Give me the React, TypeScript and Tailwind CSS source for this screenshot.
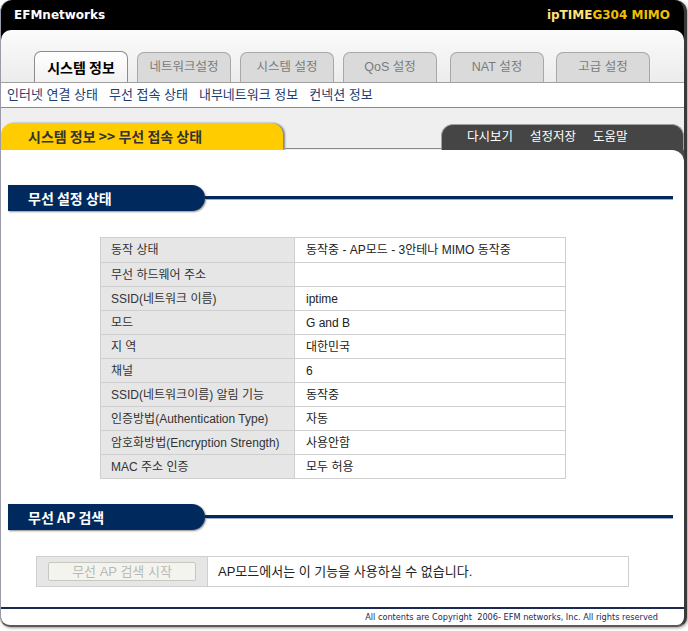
import React from "react";

const tabs = [
  { label: "시스템 정보", active: true, ml: "ml-[33px]" },
  { label: "네트워크설정", active: false, ml: "ml-[9px]" },
  { label: "시스템 설정", active: false, ml: "ml-[9px]" },
  { label: "QoS 설정", active: false, ml: "ml-[9px]" },
  { label: "NAT 설정", active: false, ml: "ml-[13px]" },
  { label: "고급 설정", active: false, ml: "ml-[12px]" },
];

const rows: [string, string][] = [
  ["동작 상태", "동작중 - AP모드 - 3안테나 MIMO 동작중"],
  ["무선 하드웨어 주소", ""],
  ["SSID(네트워크 이름)", "iptime"],
  ["모드", "G and B"],
  ["지 역", "대한민국"],
  ["채널", "6"],
  ["SSID(네트워크이름) 알림 기능", "동작중"],
  ["인증방법(Authentication Type)", "자동"],
  ["암호화방법(Encryption Strength)", "사용안함"],
  ["MAC 주소 인증", "모두 허용"],
];

function SectionHeader({ title }: { title: string }) {
  return (
    <div className="flex items-center h-[26px]">
      <div className="ml-[7px] w-[197px] h-[26px] bg-[#002a5e] rounded-r-[14px] shadow-[1px_1px_2px_rgba(0,0,0,0.45)] flex items-center pl-[20px] text-white font-bold text-[14px] font-['Noto_Sans_CJK_KR',sans-serif]">
        {title}
      </div>
      <div className="flex-1 mr-[11px] h-[4px] bg-[#002a5e] border-b border-b-[#9fb0c8]" />
    </div>
  );
}

export default function App() {
  return (
    <div className="w-[688px] h-[631px] bg-white font-['Liberation_Sans','Noto_Sans_CJK_KR',sans-serif] text-[12px]">
      <div className="w-[687px] h-[627px] flex flex-col bg-black rounded-t-[12px] rounded-b-[10px] overflow-hidden border-l border-l-[#9a9aa8] border-r-[3px] border-r-[#3a3a3a] border-b-[2px] border-b-[#5a5a5a] shadow-[1px_1px_3px_rgba(0,0,0,0.4)]">
        {/* header */}
        <div className="h-[30px] shrink-0 flex items-center justify-between pl-[13px] pr-[14px] font-['DejaVu_Sans',sans-serif] font-bold text-[12px]">
          <span className="text-white">EFMnetworks</span>
          <span>
            <span className="text-[#ffe27a]">ipTIME</span>
            <span className="text-[#f0c000]">G304 MIMO</span>
          </span>
        </div>
        {/* tabs */}
        <div className="h-[52px] shrink-0 bg-gradient-to-b from-[#fbfbfb] to-[#ececec] rounded-t-[10px] flex items-end">
          {tabs.map((t) => (
            <div
              key={t.label}
              className={
                t.active
                  ? `${t.ml} w-[94px] h-[31px] rounded-t-[7px] border border-b-0 border-[#8c8c8c] bg-gradient-to-b from-[#ffffff] to-[#f2f2f2] flex items-center justify-center font-bold text-[14px] text-black font-['Noto_Sans_CJK_KR',sans-serif]`
                  : `${t.ml} w-[94px] h-[30px] rounded-t-[7px] border border-b-0 border-[#a8a8a8] bg-[#dadada] flex items-center justify-center text-[12.5px] text-[#7a7a7a]`
              }
            >
              {t.label}
            </div>
          ))}
        </div>
        {/* sub nav */}
        <div className="h-[26px] shrink-0 bg-white border-t border-t-[#a0a0a0] border-b border-b-[#8a8a8a] flex items-center pl-[6px] gap-[11px] text-[13px] text-[#1d3c72]">
          <span>인터넷 연결 상태</span>
          <span>무선 접속 상태</span>
          <span>내부네트워크 정보</span>
          <span>컨넥션 정보</span>
        </div>
        {/* action bar */}
        <div className="h-[42px] shrink-0 bg-[#efefef] flex items-end">
          <div className="w-[282px] h-[27px] bg-[#ffcc00] rounded-t-[12px] shadow-[2px_0_2px_rgba(0,0,0,0.45)] flex items-center pl-[27px] font-bold text-[14px] text-[#333333] font-['Noto_Sans_CJK_KR',sans-serif]">
            시스템 정보 &gt;&gt; 무선 접속 상태
          </div>
          <div className="flex-1 h-[2px] border-b border-b-[#8a8a8a] mb-[1px] ml-[2px]" />
          <div className="w-[243px] h-[26px] bg-[#454545] rounded-t-[12px] border border-b-0 border-[#a0a0a0] flex items-center pl-[25px] gap-[17px] text-white text-[12.5px]">
            <span>다시보기</span>
            <span>설정저장</span>
            <span>도움말</span>
          </div>
        </div>
        {/* content */}
        <div className="flex-1 bg-[#4a4a4a]">
          <div className="h-full bg-white rounded-tr-[12px] flex flex-col pt-[35px]">
            <SectionHeader title="무선 설정 상태" />
            <div className="mt-[26px] ml-[99px] w-[466px] border border-[#cfcfcf] text-[12px]">
              {rows.map(([k, v], i) => (
                <div key={i} className={`flex h-[24px] ${i > 0 ? "border-t border-t-[#cfcfcf]" : ""}`}>
                  <div className="w-[194px] bg-[#e6e6e6] border-r border-r-[#cfcfcf] flex items-center pl-[10px] text-[#333333] whitespace-nowrap">
                    {k}
                  </div>
                  <div className="flex-1 flex items-center pl-[11px] text-[#222222] whitespace-nowrap">{v}</div>
                </div>
              ))}
            </div>
            <div className="mt-[25px]">
              <SectionHeader title="무선 AP 검색" />
            </div>
            <div className="mt-[26px] ml-[35px] w-[593px] h-[31px] border border-[#cfcfcf] flex">
              <div className="w-[171px] bg-[#e6e6e6] border-r border-r-[#cfcfcf] flex items-center pl-[11px]">
                <div className="w-[148px] h-[19px] bg-[#f4f4ee] border border-[#c8c8c0] rounded-[2px] flex items-center justify-center text-[#b8b8b8] text-[13px]">
                  무선 AP 검색 시작
                </div>
              </div>
              <div className="flex-1 flex items-center pl-[10px] text-[#222222] text-[13px]">
                AP모드에서는 이 기능을 사용하실 수 없습니다.
              </div>
            </div>
            <div className="mt-[20px] h-[2px] bg-[#1a2a55]" />
            <div className="flex-1 flex items-center justify-end pr-[26px] text-[8.2px] text-[#1a2a55] font-['DejaVu_Sans',sans-serif] whitespace-pre">
              {"All contents are Copyright  2006- EFM networks, Inc. All rights reserved"}
            </div>
          </div>
        </div>
      </div>
    </div>
  );
}
